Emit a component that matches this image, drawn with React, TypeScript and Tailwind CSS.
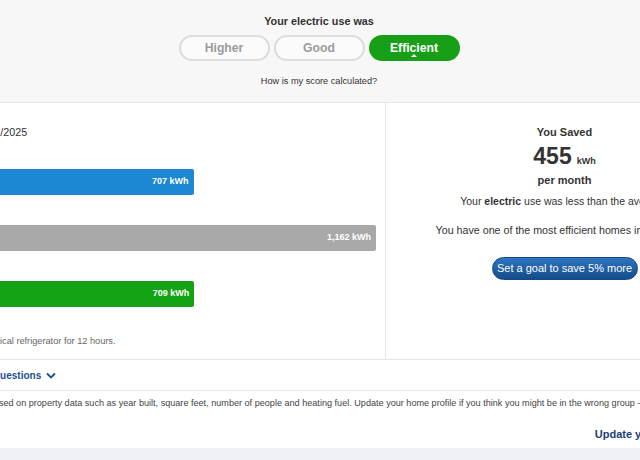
import React from "react";

type Bar = {
  label: string;
  value: number;
  color: string;
};

const bars: Bar[] = [
  { label: "You", value: 707, color: "bg-[#1c87d3]" },
  { label: "Average", value: 1162, color: "bg-[#a9a9a9]" },
  { label: "Efficient", value: 709, color: "bg-[#14a314]" },
];

const maxValue = 1162;

const ScorePill = ({ text, active }: { text: string; active?: boolean }) => (
  <div
    className={`relative flex h-[26px] w-[91px] items-center justify-center rounded-full border-2 text-[12.2px] font-bold ${
      active
        ? "border-[#17a017] bg-[#17a017] text-white"
        : "border-[#dcdcdc] bg-[#fbfbfb] text-[#9b9b9b]"
    }`}
  >
    {text}
    {active && (
      <span className="absolute bottom-[2px] left-1/2 -translate-x-1/2 border-x-[3px] border-b-[3px] border-x-transparent border-b-white" />
    )}
  </div>
);

export default function App() {
  return (
    <div
      className="h-[460px] w-[640px] overflow-hidden bg-white text-[#333]"
      style={{ fontFamily: '"Liberation Sans", Arial, sans-serif' }}
    >
      <div className="ml-[-105px] w-[848px]">
        {/* score header */}
        <div className="flex flex-col items-center border-b border-[#e6e6e6] bg-[#f7f7f7] pb-[15px] pt-[14px]">
          <h2 className="text-[10.8px] font-bold leading-[14px] text-[#333]">
            Your electric use was
          </h2>
          <div className="mt-[7px] flex gap-[4px]">
            <ScorePill text="Higher" />
            <ScorePill text="Good" />
            <ScorePill text="Efficient" active />
          </div>
          <a className="mt-[14px] text-[9.2px] leading-[12px] text-[#333]">
            How is my score calculated?
          </a>
        </div>

        {/* comparison panels */}
        <div className="flex border-b border-[#e6e6e6]">
          <div className="w-[491px] border-r border-[#e6e6e6] pb-[12px] pl-[15px] pr-[9px] pt-[22px]">
            <p className="text-[10.75px] leading-[14px] text-[#333]">
              10/01/2025 - 10/31/2025
            </p>
            <div className="mt-[30px] flex flex-col gap-[30px]">
              {bars.map((b) => (
                <div
                  key={b.label}
                  className={`flex h-[26px] items-center justify-between rounded-[2px] px-[5px] text-[9px] font-bold text-white ${b.color}`}
                  style={{ width: `${(b.value / maxValue) * 100}%` }}
                >
                  <span>{b.label}</span>
                  <span>{b.value.toLocaleString("en-US")} kWh</span>
                </div>
              ))}
            </div>
            <p className="ml-[2px] mt-[28px] text-[9.2px] leading-[12px] text-[#666]">
              That's like using a typical refrigerator for 12 hours.
            </p>
          </div>

          <div className="flex flex-1 flex-col items-center pt-[22px] text-center">
            <p className="text-[11px] font-bold leading-[14px]">You Saved</p>
            <p className="mt-[5px] flex items-baseline leading-[24px]">
              <span className="text-[23px] font-bold">455</span>
              <span className="ml-[5px] text-[9px] font-bold">kWh</span>
            </p>
            <p className="text-[11px] font-bold leading-[14px]">per month</p>
            <p className="mt-[7px] whitespace-nowrap text-[10.5px] leading-[14px]">
              Your <b>electric</b> use was less than the average.
            </p>
            <p className="mt-[15px] whitespace-nowrap text-[10.7px] leading-[14px]">
              You have one of the most efficient homes in your area.
            </p>
            <button className="mt-[20px] h-[23px] w-[146px] rounded-full border border-[#124886] bg-linear-to-b from-[#2f75c0] to-[#154c8a] text-[11px] text-white">
              Set a goal to save 5% more
            </button>
          </div>
        </div>

        {/* questions */}
        <div className="flex h-[31px] items-center gap-[5px] border-b border-[#e6e6e6] pl-[11px] text-[10px] font-bold text-[#1d4f8f]">
          <span>Frequently Asked Questions</span>
          <svg width="10" height="7" viewBox="0 0 10 7" fill="none">
            <path d="M1 1.5l4 4 4-4" stroke="#1d4f8f" strokeWidth="1.8" />
          </svg>
        </div>
        <div className="pb-[7px] pl-[22px] pr-[15px] pt-[6px]">
          <p className="whitespace-nowrap text-[9.1px] leading-[12px] text-[#444]">
            Comparisons are based on property data such as year built, square feet, number of people and heating fuel. Update your home profile if you think you might be in the wrong group - this helps us make better comparisons.
          </p>
          <div className="mt-[18px] text-right text-[11px] leading-[14px]">
            <a className="font-bold text-[#1a3f74]">Update your home profile</a>
          </div>
        </div>
        <div className="h-[40px] bg-[#eef2f6]" />
      </div>
    </div>
  );
}
